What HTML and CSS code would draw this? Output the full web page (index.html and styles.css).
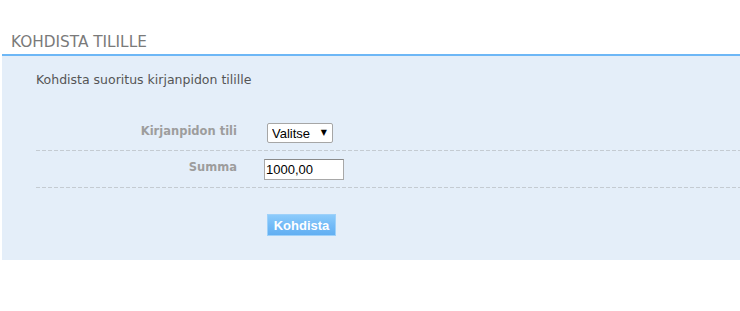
FILE: index.html
```html
<!DOCTYPE html>
<html lang="fi">
<head>
<meta charset="utf-8">
<title>Kohdista tilille</title>
<link rel="stylesheet" href="styles.css">
</head>
<body>
<div class="page">
  <h2 class="title">KOHDISTA TILILLE</h2>
  <div class="panel">
    <p class="desc">Kohdista suoritus kirjanpidon tilille</p>
    <div class="form">
      <div class="row row-first">
        <label class="label">Kirjanpidon tili</label>
        <div class="control">
          <span class="select-wrap">
            <select class="select"><option>Valitse</option></select>
            <span class="arrow">▼</span>
          </span>
        </div>
      </div>
      <div class="row">
        <label class="label">Summa</label>
        <div class="control">
          <input class="input" type="text" value="1000,00">
        </div>
      </div>
    </div>
    <div class="actions">
      <button class="btn" type="button">Kohdista</button>
    </div>
  </div>
</div>
</body>
</html>
```

FILE: styles.css
```css
html, body {
  margin: 0;
  padding: 0;
  background: #ffffff;
}

.page {
  padding-left: 2px;
  font-family: "DejaVu Sans", Verdana, sans-serif;
}

.title {
  margin: 0;
  padding: 32px 0 2px 9px;
  font-size: 15.3px;
  line-height: 20px;
  font-weight: normal;
  color: #7a7a7a;
}

.panel {
  border-top: 2px solid #6db7f6;
  background: #e4eef9;
  padding: 16px 0 24px 34px;
}

.desc {
  margin: 0;
  font-size: 12.5px;
  line-height: 16px;
  color: #555555;
}

.form {
  margin-top: 26px;
}

.row {
  display: flex;
  align-items: center;
  height: 36px;
  padding-bottom: 1px;
  background: repeating-linear-gradient(to right, #c4cbd2 0 4px, transparent 4px 6px) left bottom / 100% 1px no-repeat;
}

.label {
  align-self: flex-start;
  width: 201px;
  padding-right: 27px;
  padding-top: 6px;
  text-align: right;
  font-size: 11.5px;
  line-height: 20px;
  font-weight: bold;
  color: #9d9d9d;
}

.row-first .label {
  padding-top: 7px;
}

.control {
  display: flex;
  align-items: center;
}

.select-wrap {
  position: relative;
  display: inline-block;
  margin-left: 3px;
  margin-top: 2px;
}

.select {
  appearance: none;
  -webkit-appearance: none;
  width: 66px;
  height: 20px;
  margin: 0;
  padding: 0 0 0 4px;
  border: 1px solid #a6a6a6;
  border-radius: 2px;
  background: #ffffff;
  font-family: "Liberation Sans", Arial, sans-serif;
  font-size: 13px;
  color: #000000;
}

.arrow {
  position: absolute;
  right: 6px;
  top: 5px;
  font-family: "DejaVu Sans", sans-serif;
  font-size: 8px;
  line-height: 10px;
  color: #000000;
  pointer-events: none;
}

.input {
  box-sizing: border-box;
  width: 80px;
  height: 21px;
  margin: 0;
  padding: 0 0 0 1px;
  border: 1px solid #a8a8a8;
  border-top-color: #8a8a8a;
  background: #ffffff;
  font-family: "Liberation Sans", Arial, sans-serif;
  font-size: 13px;
  color: #000000;
}

.actions {
  margin-top: 26px;
  padding-left: 231px;
}

.btn {
  box-sizing: border-box;
  width: 69px;
  height: 22px;
  margin: 0;
  padding: 0;
  border: 1px solid #9ed1fa;
  background: linear-gradient(to bottom, #8ccbfb 0%, #74bbf7 50%, #62aff2 100%);
  font-family: "Liberation Sans", Arial, sans-serif;
  font-size: 13px;
  font-weight: bold;
  color: #ffffff;
  cursor: pointer;
}
```
